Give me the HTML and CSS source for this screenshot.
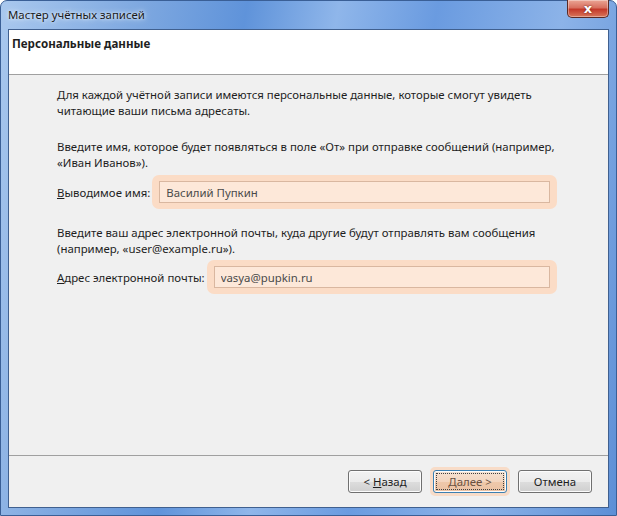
FILE: index.html
```html
<!DOCTYPE html>
<html lang="ru">
<head>
    <meta charset="UTF-8">
    <title>Мастер учётных записей</title>
    <link rel="stylesheet" href="styles.css">
</head>
<body>
    <div class="window">
        <div class="titlebar">
            <span class="title">Мастер учётных записей</span>
            <button class="close" type="button">x</button>
        </div>
        <div class="client">
            <header class="page-header">
                <h1>Персональные данные</h1>
            </header>
            <main class="page-body">
                <p>Для каждой учётной записи имеются персональные данные, которые смогут увидеть<br>читающие ваши письма адресаты.</p>

                <p class="gap">Введите имя, которое будет появляться в поле «От» при отправке сообщений (например,<br>«Иван Иванов»).</p>
                <div class="field">
                    <label for="name"><u>В</u>ыводимое имя:</label>
                    <div class="glow"><input type="text" id="name" value="Василий Пупкин"></div>
                </div>

                <p class="gap-small">Введите ваш адрес электронной почты, куда другие будут отправлять вам сообщения<br>(например, «user@example.ru»).</p>
                <div class="field second">
                    <label for="email"><u>А</u>дрес электронной почты:</label>
                    <div class="glow"><input type="text" id="email" value="vasya@pupkin.ru"></div>
                </div>
            </main>
            <footer class="page-footer">
                <button type="button" class="btn">&lt; <u>Н</u>азад</button>
                <div class="btn-glow">
                    <button type="button" class="btn default"><span class="focus"><u>Д</u>алее &gt;</span></button>
                </div>
                <button type="button" class="btn">Отмена</button>
            </footer>
        </div>
    </div>
</body>
</html>
```

FILE: styles.css
```css
body {
    margin: 0;
    padding: 0;
    background: #ffffff;
    font-family: 'Noto Sans', 'Open Sans', sans-serif;
    font-size: 11.4px;
    color: #1e1e1e;
}

.window {
    width: 617px;
    height: 516px;
    box-sizing: border-box;
    display: flex;
    flex-direction: column;
    padding: 0 7px 7px 7px;
    border-radius: 7px 7px 0 0;
    border: 1px solid #3a5f96;
    background: linear-gradient(100deg, #a9c8ee 0%, #7ea8e0 20%, #5f93da 35%, #8fb6ea 48%, #6a9be0 62%, #8cb3e8 80%, #5d8fd6 100%);
}

.titlebar {
    height: 28px;
    display: flex;
    align-items: flex-start;
    justify-content: space-between;
}

.title {
    margin-top: 6px;
    color: #1a1a1a;
    text-shadow: 0 0 6px #e6f0fb, 0 0 3px #e6f0fb;
}

.close {
    width: 42px;
    height: 18px;
    margin-top: -1px;
    padding: 0;
    border: 1px solid #5a2a25;
    border-top: none;
    border-radius: 0 0 5px 5px;
    background: linear-gradient(#eba595 0%, #d87060 45%, #c4392a 55%, #d8765a 100%);
    box-shadow: inset 0 0 0 1px rgba(255, 255, 255, 0.35);
    color: #ffffff;
    font-family: 'DejaVu Sans', sans-serif;
    font-size: 13px;
    font-weight: bold;
    line-height: 15px;
    text-shadow: 0 0 2px #5a1a10;
}

.client {
    flex: 1;
    display: flex;
    flex-direction: column;
    border: 1px solid #40608f;
    background: #f0f0f0;
}

.page-header {
    height: 45px;
    background: #ffffff;
    border-bottom: 1px solid #a0a0a0;
    padding: 6px 0 0 3px;
    box-sizing: border-box;
}

.page-header h1 {
    margin: 0;
    font-size: 11.6px;
    font-weight: bold;
    line-height: 16px;
}

.page-body {
    flex: 1;
    padding: 12px 0 0 48px;
    border-bottom: 1px solid #a0a0a0;
}

.page-body p {
    margin: 0;
    line-height: 16px;
}

.page-body .gap {
    margin-top: 20px;
}

.page-body .gap-small {
    margin-top: 16px;
}

.field {
    display: flex;
    align-items: center;
    margin-top: 4px;
}

.field.second {
    margin-top: 3px;
}

.field label {
    margin-right: 2px;
}

.glow {
    flex: 1;
    margin-right: 51px;
    padding: 6px 7px;
    border-radius: 7px;
    background: #fbdcc6;
}

.glow input {
    display: block;
    width: 100%;
    box-sizing: border-box;
    height: 22px;
    padding: 0 6px;
    border: 1px solid #d9b7a0;
    background: #fde8d9;
    color: #4a4a4a;
    font-family: inherit;
    font-size: 11.4px;
}

.page-footer {
    height: 51px;
    display: flex;
    align-items: center;
    justify-content: flex-end;
    gap: 8px;
    padding-right: 16px;
}

.btn {
    width: 74px;
    height: 23px;
    padding: 0;
    border: 1px solid #707070;
    border-radius: 3px;
    background: linear-gradient(#f2f2f2 0%, #ebebeb 50%, #dddddd 51%, #cfcfcf 100%);
    box-shadow: inset 0 0 0 1px #fcfcfc;
    font-family: inherit;
    font-size: 11.4px;
    color: #1e1e1e;
}

.btn-glow {
    padding: 3px;
    border-radius: 5px;
    background: #f8dcc8;
}

.btn.default {
    display: block;
    border-color: #3c7fb1;
    background: linear-gradient(#f7e2d2 0%, #f4d6c0 50%, #efc8aa 51%, #ebc2a4 100%);
    color: #6a5040;
    padding: 2px;
}

.focus {
    display: flex;
    align-items: center;
    justify-content: center;
    height: 100%;
    border: 1px dotted #404040;
    box-sizing: border-box;
}
```
